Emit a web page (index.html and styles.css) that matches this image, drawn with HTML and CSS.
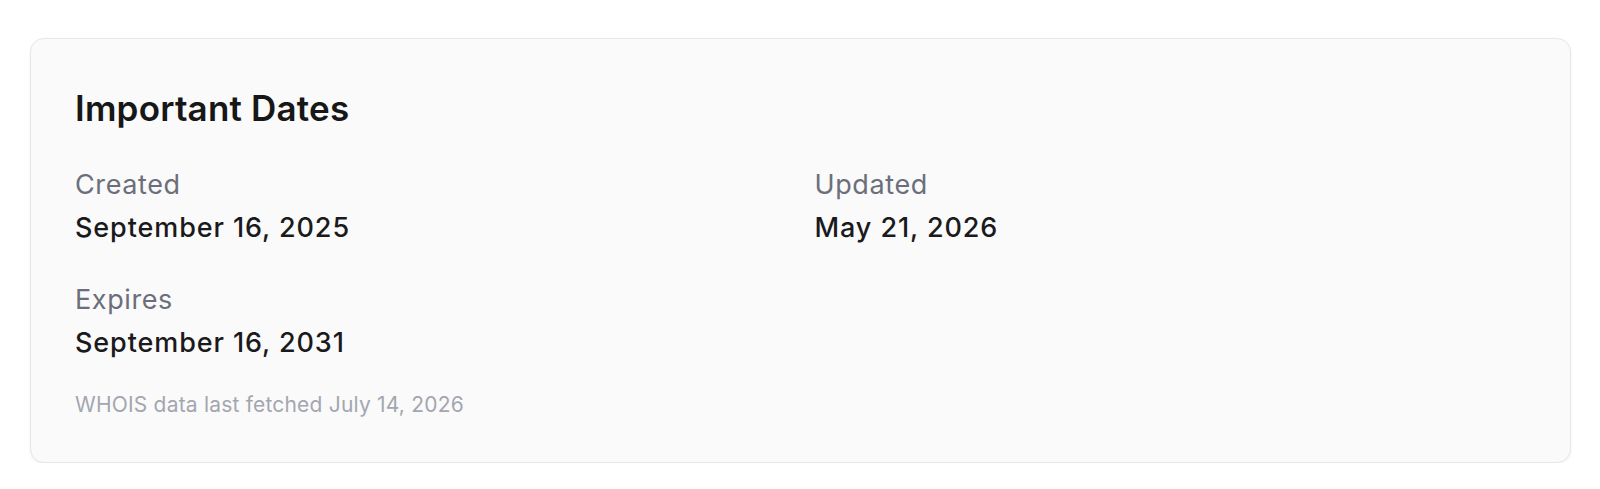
FILE: index.html
```html
<!DOCTYPE html>
<html lang="en">
<head>
<meta charset="utf-8">
<title>Important Dates</title>
<link rel="stylesheet" href="styles.css">
</head>
<body>
  <section class="card">
    <h2 class="card-title">Important Dates</h2>
    <div class="dates">
      <div class="date-item">
        <div class="date-label">Created</div>
        <div class="date-value">September 16, 2025</div>
      </div>
      <div class="date-item">
        <div class="date-label">Updated</div>
        <div class="date-value">May 21, 2026</div>
      </div>
      <div class="date-item">
        <div class="date-label">Expires</div>
        <div class="date-value">September 16, 2031</div>
      </div>
    </div>
    <p class="footnote">WHOIS data last fetched July 14, 2026</p>
  </section>
</body>
</html>
```

FILE: styles.css
```css
* { box-sizing: border-box; }

html, body {
  margin: 0;
  background: #ffffff;
}

body {
  padding: 38px 29px 0 30px;
  font-family: Inter, "Noto Sans", sans-serif;
  color: #18181b;
}

.card {
  background: #fafafa;
  border: 1px solid #e7e7e9;
  border-radius: 14px;
  box-shadow: 0 1px 3px rgba(0, 0, 0, 0.06);
  padding: 44px;
  height: 425px;
}

.card-title {
  margin: 0;
  font-size: 35px;
  line-height: 50px;
  font-weight: 600;
  letter-spacing: 0.2px;
  color: #171717;
}

.dates {
  display: grid;
  grid-template-columns: 1fr 1fr;
  column-gap: 28px;
  row-gap: 36px;
  margin-top: 34px;
}

.date-label {
  font-size: 27px;
  line-height: 36px;
  letter-spacing: 0.6px;
  color: #6b6f7b;
  margin-bottom: 7px;
}

.date-value {
  font-size: 27px;
  line-height: 36px;
  font-weight: 500;
  letter-spacing: 0.9px;
  color: #1a1a1c;
}

.footnote {
  margin: 29px 0 0;
  font-size: 21px;
  line-height: 30px;
  letter-spacing: 0.2px;
  color: #a3a6b0;
}
```
